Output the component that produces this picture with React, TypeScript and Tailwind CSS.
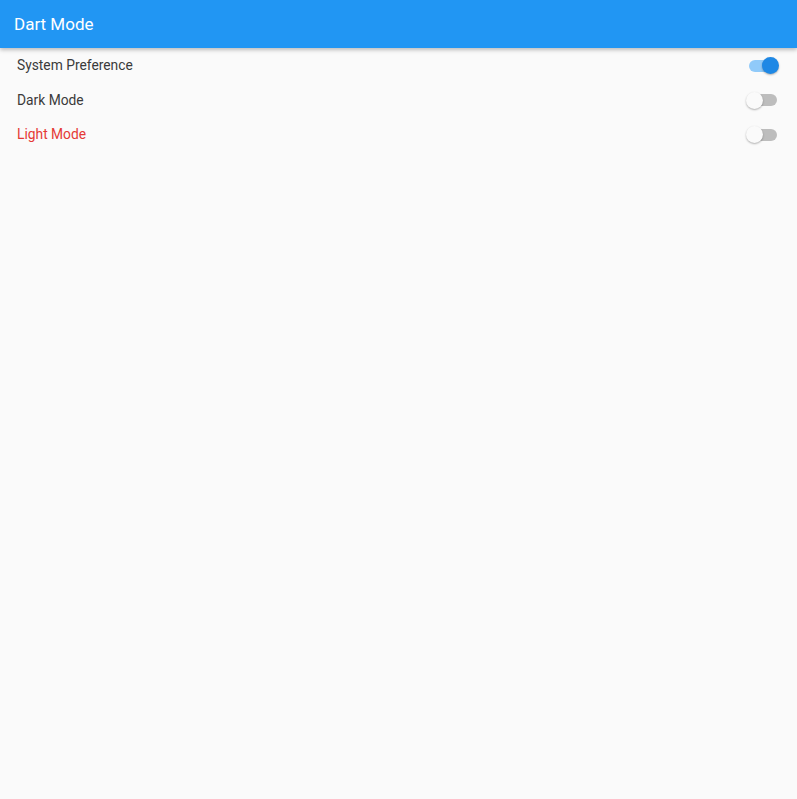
import React, { useState } from "react";

function Toggle({ on, onClick }: { on: boolean; onClick: () => void }) {
  return (
    <button onClick={onClick} className="relative w-[34px] h-[20px] flex items-center outline-none">
      <span
        className={
          "absolute left-[6px] w-[28px] h-[12px] rounded-full " +
          (on ? "bg-[#90caf9]" : "bg-[#bdbdbd]")
        }
      />
      <span
        className={
          "absolute top-[1.5px] w-[17px] h-[17px] rounded-full shadow-[0_1px_2px_rgba(0,0,0,0.3)] " +
          (on ? "left-[18.5px] bg-[#1e88e5]" : "left-[2.5px] bg-[#fafafa]")
        }
      />
    </button>
  );
}

export default function App() {
  const [sys, setSys] = useState(true);
  const [dark, setDark] = useState(false);
  const [light, setLight] = useState(false);
  const rows = [
    { label: "System Preference", on: sys, set: setSys, color: "text-[#3a3a3a]" },
    { label: "Dark Mode", on: dark, set: setDark, color: "text-[#3a3a3a]" },
    { label: "Light Mode", on: light, set: setLight, color: "text-[#e53935]" },
  ];
  return (
    <div className="w-[797px] h-[799px] bg-[#fafafa] flex flex-col" style={{ fontFamily: "Roboto, sans-serif" }}>
      <div className="h-[48px] bg-[#2196f3] flex items-center px-[14px] pt-[2px] shadow-[0_2px_4px_rgba(0,0,0,0.25)] relative z-10">
        <span className="text-white text-[17px] font-normal">Dart Mode</span>
      </div>
      <div className="flex flex-col pt-[0.5px]">
        {rows.map((r) => (
          <div key={r.label} className="h-[34.5px] flex items-center justify-between pl-[17px] pr-[20px]">
            <span className={"text-[13.8px] " + r.color}>{r.label}</span>
            <Toggle on={r.on} onClick={() => r.set(!r.on)} />
          </div>
        ))}
      </div>
    </div>
  );
}
